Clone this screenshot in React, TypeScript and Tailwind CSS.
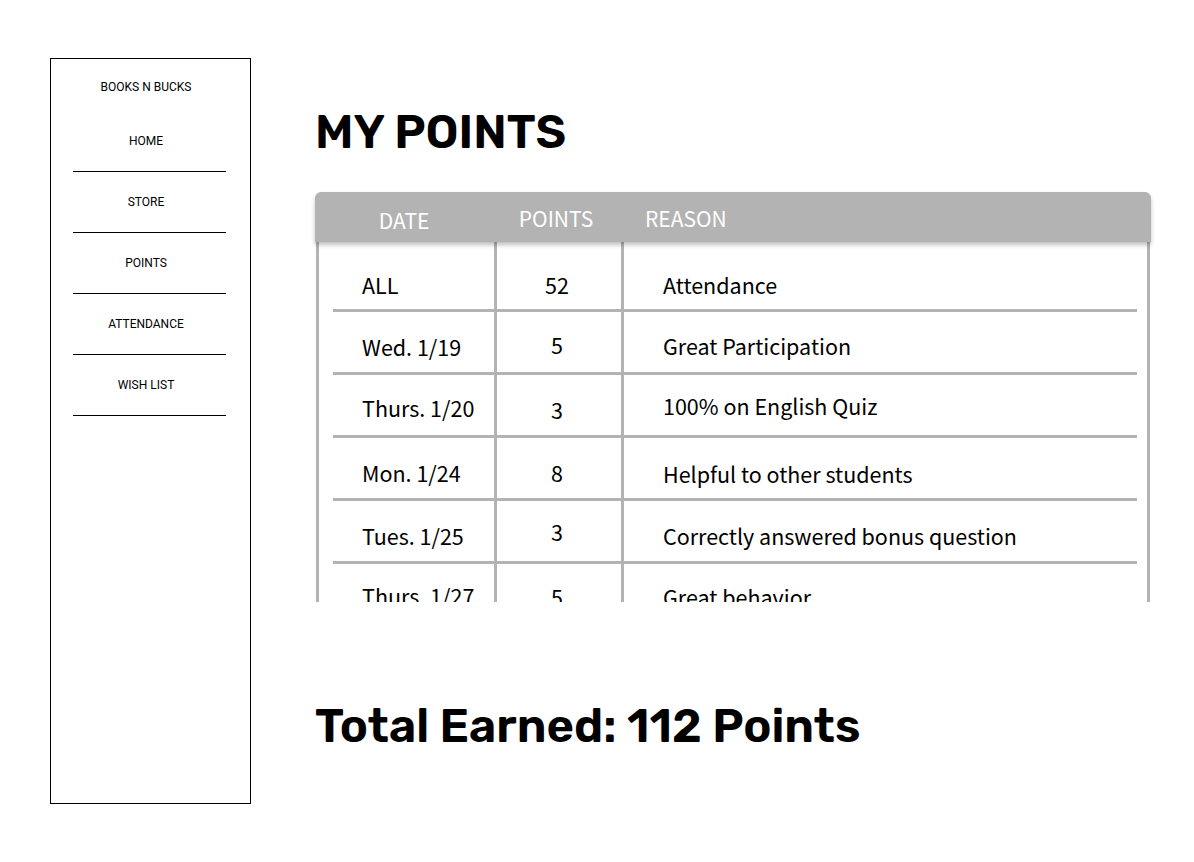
const NAV_ITEMS = ['HOME', 'STORE', 'POINTS', 'ATTENDANCE', 'WISH LIST'];

interface PointRow {
  date: string;
  points: string;
  reason: string;
  // small per-cell nudges, the mockup isn't perfectly aligned
  dateY: string;
  pointsY: string;
  reasonY: string;
}

const ROWS: PointRow[] = [
  { date: 'ALL', points: '52', reason: 'Attendance', dateY: 'pt-[28px]', pointsY: 'pt-[28px]', reasonY: 'pt-[28px]' },
  { date: 'Wed. 1/19', points: '5', reason: 'Great Participation', dateY: 'pt-[20px]', pointsY: 'pt-[18px]', reasonY: 'pt-[19px]' },
  { date: 'Thurs. 1/20', points: '3', reason: '100% on English Quiz', dateY: 'pt-[18px]', pointsY: 'pt-[20px]', reasonY: 'pt-[16px]' },
  { date: 'Mon. 1/24', points: '8', reason: 'Helpful to other students', dateY: 'pt-[20px]', pointsY: 'pt-[20px]', reasonY: 'pt-[21px]' },
  { date: 'Tues. 1/25', points: '3', reason: 'Correctly answered bonus question', dateY: 'pt-[20px]', pointsY: 'pt-[16px]', reasonY: 'pt-[20px]' },
  { date: 'Thurs. 1/27', points: '5', reason: 'Great behavior', dateY: 'pt-[17px]', pointsY: 'pt-[18px]', reasonY: 'pt-[18px]' },
];

const headingFont = "font-['Rubik','Roboto','Liberation_Sans',sans-serif]";
const tableFont = "font-['Noto_Sans_CJK_JP','Source_Sans_Pro','Lato',sans-serif]";

function Sidebar() {
  return (
    <aside className="w-[201px] h-[746px] border border-black shrink-0 font-['Roboto','Liberation_Sans',sans-serif] text-[12px] text-black">
      <div className="h-[52px] pt-[4px] pr-[9px] flex items-center justify-center">BOOKS N BUCKS</div>
      <nav className="ml-[22px] mr-[24px]">
        {NAV_ITEMS.map((item) => (
          <div key={item} className="h-[61px] pr-[7px] flex items-center justify-center border-b border-black">
            {item}
          </div>
        ))}
      </nav>
    </aside>
  );
}

export default function App() {
  return (
    <div className="w-[1194px] h-[862px] bg-white flex pl-[50px] pt-[58px]">
      <Sidebar />

      <main className="ml-[64px] w-[836px]">
        <h1 className={`${headingFont} font-semibold text-[47px] leading-none text-black mt-[51px]`}>
          MY POINTS
        </h1>

        <div className={`mt-[36px] ${tableFont}`}>
          <div className="relative z-10 h-[50px] pt-[4px] bg-[#b3b3b3] rounded-t-[6px] shadow-[0_3px_4px_rgba(0,0,0,0.25)] flex items-center text-white text-[21px]">
            <div className="w-[178px] text-center pt-[3px]">DATE</div>
            <div className="w-[126px] text-center">POINTS</div>
            <div className="pl-[26px]">REASON</div>
          </div>

          <div className="h-[360px] overflow-hidden border-x-[3px] border-[#b3b3b3] ml-[1px] mr-[1px]">
            <div className="relative">
              <div className="absolute top-0 bottom-0 left-[175px] w-[3px] bg-[#b3b3b3]" />
              <div className="absolute top-0 bottom-0 left-[302px] w-[3px] bg-[#b3b3b3]" />
              {ROWS.map((row, i) => (
                <div
                  key={row.date}
                  className={`flex items-start text-[21.5px] leading-[30px] text-black ml-[14px] mr-[10px] ${i === 0 ? 'h-[70px]' : 'h-[63px]'} ${i < ROWS.length - 1 ? 'border-b-[3px] border-[#b3b3b3]' : ''}`}
                >
                  <div className={`w-[161px] pl-[29px] ${row.dateY}`}>{row.date}</div>
                  <div className={`w-[126px] text-center ${row.pointsY}`}>{row.points}</div>
                  <div className={`pl-[43px] ${row.reasonY}`}>{row.reason}</div>
                </div>
              ))}
            </div>
          </div>
        </div>

        <h2 className={`${headingFont} font-semibold text-[47px] leading-none text-black mt-[101px]`}>
          Total Earned: 112 Points
        </h2>
      </main>
    </div>
  );
}
